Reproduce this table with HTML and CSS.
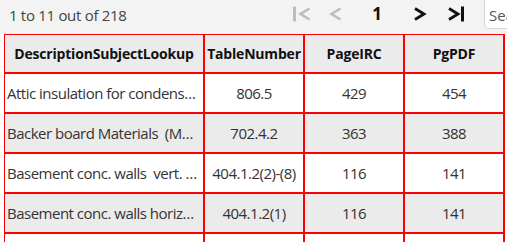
FILE: index.html
```html
<!DOCTYPE html>
<html>
<head>
<meta charset="utf-8">
<link rel="stylesheet" href="styles.css">
</head>
<body>
<div class="topbar">
  <div class="summary">1 to 11 out of 218</div>
  <div class="pager">
    <span class="pbtn">
      <svg width="20" height="16" viewBox="0 0 20 16"><rect x="1" y="0.5" width="3" height="15" fill="#bdbdbd"/><polyline points="17.5,2.5 8.5,8 17.5,13.5" fill="none" stroke="#bdbdbd" stroke-width="2.6"/></svg>
    </span>
    <span class="pbtn prev">
      <svg width="20" height="16" viewBox="0 0 20 16"><polyline points="14.5,2.5 5.5,8 14.5,13.5" fill="none" stroke="#bdbdbd" stroke-width="2.6"/></svg>
    </span>
    <span class="pbtn cur">1</span>
    <span class="pbtn next">
      <svg width="20" height="16" viewBox="0 0 20 16"><polyline points="5,2.5 14,8 5,13.5" fill="none" stroke="#111" stroke-width="2.8"/></svg>
    </span>
    <span class="pbtn last">
      <svg width="20" height="16" viewBox="0 0 20 16"><polyline points="3,2.5 12,8 3,13.5" fill="none" stroke="#111" stroke-width="2.8"/><rect x="15" y="0.5" width="3" height="15" fill="#111"/></svg>
    </span>
  </div>
  <div class="search">Search...</div>
</div>
<table class="grid">
  <colgroup>
    <col class="c1"><col class="c2"><col class="c3"><col class="c4">
  </colgroup>
  <thead>
    <tr><th>DescriptionSubjectLookup</th><th>TableNumber</th><th>PageIRC</th><th>PgPDF</th></tr>
  </thead>
  <tbody>
    <tr><td class="desc">Attic insulation for condensation control</td><td>806.5</td><td>429</td><td>454</td></tr>
    <tr class="alt"><td class="desc">Backer board Materials&nbsp; (Max Board)</td><td>702.4.2</td><td>363</td><td>388</td></tr>
    <tr><td class="desc">Basement conc. walls&nbsp; vert. reinforcement</td><td>404.1.2(2)-(8)</td><td>116</td><td>141</td></tr>
    <tr class="alt"><td class="desc">Basement conc. walls horizontal reinforcement</td><td>404.1.2(1)</td><td>116</td><td>141</td></tr>
    <tr><td class="desc">Basement walls</td><td>404.1.1</td><td>115</td><td>140</td></tr>
  </tbody>
</table>
</body>
</html>
```
FILE: styles.css
```css
html, body {
  margin: 0;
  padding: 0;
  overflow: hidden;
  background: #fff;
  font-family: "Open Sans", "Noto Sans", sans-serif;
}
.topbar {
  width: 560px;
  height: 34px;
  background: #f3f3f3;
  display: flex;
  align-items: flex-start;
}
.summary {
  flex: 1;
  padding-left: 9px;
  font-size: 15px;
  line-height: 20px;
  padding-top: 5px;
  letter-spacing: -0.3px;
  color: #444;
}
.pager {
  display: flex;
  margin-right: 18px;
  padding-top: 6px;
}
.pbtn {
  width: 20px;
  height: 16px;
  display: block;
}
.pbtn svg { display: block; }
.prev { margin-left: 14px; }
.cur {
  margin-left: 21px;
  font-weight: 700;
  font-size: 17px;
  line-height: 16px;
  text-align: center;
  color: #111;
}
.next { margin-left: 23px; }
.last { margin-left: 16px; }
.search {
  width: 76px;
  height: 29px;
  box-sizing: border-box;
  background: #fff;
  border: 1px solid #d6d6d6;
  border-top: 0;
  border-radius: 0 0 0 5px;
  padding: 5px 0 0 4px;
  font-size: 15px;
  line-height: 20px;
  color: #555;
  white-space: nowrap;
  overflow: hidden;
}
.grid {
  margin: 0 0 0 4px;
  border-collapse: separate;
  border-spacing: 0;
  table-layout: fixed;
  width: 501px;
}
.c1 { width: 200px; }
.c2 { width: 100px; }
.c3 { width: 100px; }
.c4 { width: 101px; }
.grid th, .grid td {
  border: 1px solid #ff0000;
  padding: 0 2px;
  white-space: nowrap;
  overflow: hidden;
  text-overflow: ellipsis;
  text-align: center;
}
.grid th:last-child, .grid td:last-child { border-right-width: 2px; }
.grid th {
  height: 37px;
  padding: 0 1px;
  background: #ebebeb;
  font-size: 14px;
  font-weight: 700;
  letter-spacing: -0.2px;
  color: #111;
}
.grid td {
  height: 38px;
  font-size: 15px;
  letter-spacing: -0.5px;
  color: #333;
}
.grid td.desc { text-align: left; }
.grid tr.alt td { background: #ebebeb; }
```
